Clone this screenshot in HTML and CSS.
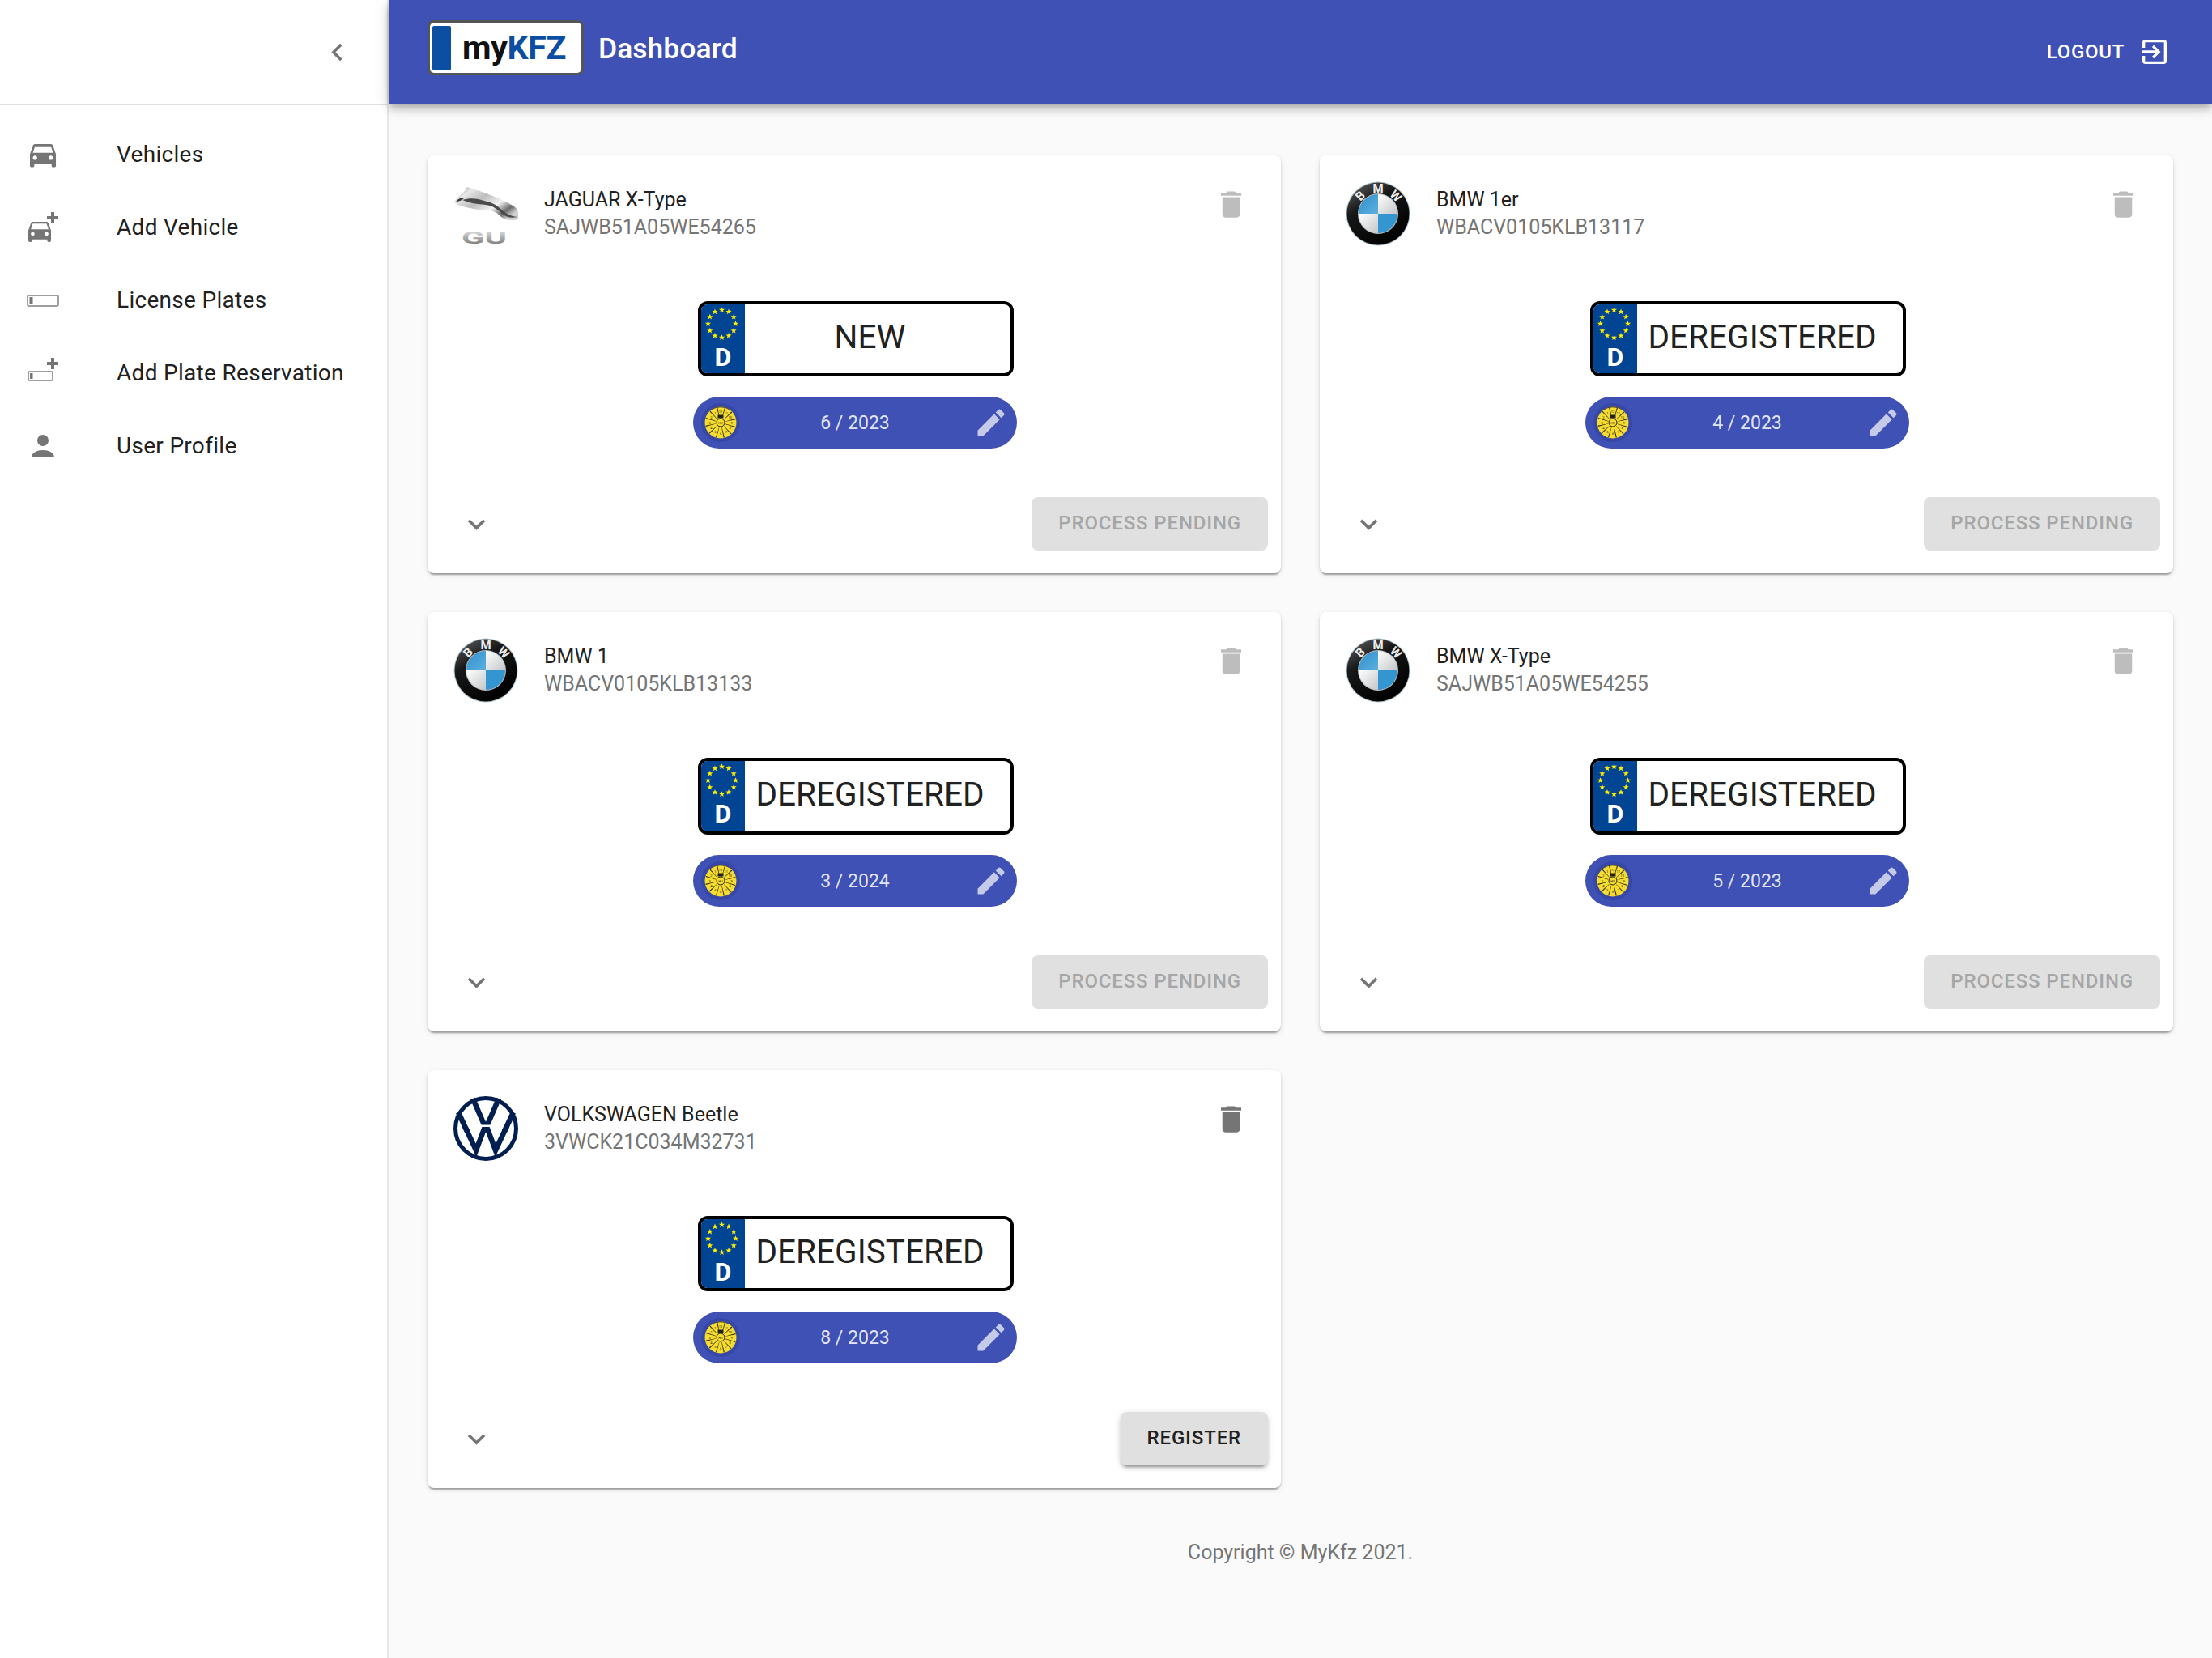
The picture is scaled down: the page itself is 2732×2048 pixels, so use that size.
FILE: index.html
```html
<!DOCTYPE html>
<html lang="en">
<head>
    <meta charset="UTF-8">
    <title>myKFZ Dashboard</title>
    <link rel="stylesheet" href="styles.css">
</head>
<body>
    <!-- shared icons and logos -->
    <svg class="sprite" aria-hidden="true">
        <defs>
            <path id="car" d="M18.92 6.01C18.72 5.42 18.16 5 17.5 5h-11c-.66 0-1.21.42-1.42 1.01L3 12v8c0 .55.45 1 1 1h1c.55 0 1-.45 1-1v-1h12v1c0 .55.45 1 1 1h1c.55 0 1-.45 1-1v-8l-2.08-5.99zM6.5 16c-.83 0-1.5-.67-1.5-1.5S5.67 13 6.5 13s1.5.67 1.5 1.5S7.33 16 6.5 16zm11 0c-.83 0-1.5-.67-1.5-1.5s.67-1.5 1.5-1.5 1.5.67 1.5 1.5-.67 1.5-1.5 1.5zM5 11l1.5-4.5h11L19 11H5z"/>
            <path id="plus" d="M34 6h4v5h5v4h-5v5h-4v-5h-5v-4h5z"/>
            <polygon id="star" points="0,-3.7 1,-1.2 3.600,-1.200 1.500,.45 2.300,3 0,1.500 -2.300,3 -1.500,.45 -3.600,-1.200 -1,-1.200"/>
            <linearGradient id="bmwRim" x1="0" y1="0" x2="0.6" y2="1">
                <stop offset="0" stop-color="#666"/>
                <stop offset=".4" stop-color="#181818"/>
                <stop offset="1" stop-color="#000"/>
            </linearGradient>
            <linearGradient id="bmwBlue" x1="0" y1="0" x2="1" y2="1">
                <stop offset="0" stop-color="#2f8fcb"/>
                <stop offset="1" stop-color="#5cb0e0"/>
            </linearGradient>
            <linearGradient id="bmwWhite" x1="0" y1="0" x2="1" y2="1">
                <stop offset="0" stop-color="#fff"/>
                <stop offset="1" stop-color="#c4c6c8"/>
            </linearGradient>
            <linearGradient id="chrome" x1="0" y1="0" x2="1" y2=".7">
                <stop offset="0" stop-color="#8c8c8c"/>
                <stop offset=".22" stop-color="#e8e8e8"/>
                <stop offset=".45" stop-color="#bdbdbd"/>
                <stop offset=".7" stop-color="#f2f2f2"/>
                <stop offset=".88" stop-color="#6a6a6a"/>
                <stop offset="1" stop-color="#d0d0d0"/>
            </linearGradient>
            <linearGradient id="chromeText" x1="0" y1="0" x2="0" y2="1">
                <stop offset="0" stop-color="#f0f0f0"/>
                <stop offset=".45" stop-color="#b0b0b0"/>
                <stop offset="1" stop-color="#666"/>
            </linearGradient>
            <clipPath id="vwTop"><rect x="0" y="0" width="80" height="35.5"/></clipPath>
            <clipPath id="vwBottom"><rect x="0" y="38" width="80" height="42"/></clipPath>
        </defs>

        <symbol id="logo-bmw" viewBox="0 0 80 80">
            <circle cx="40" cy="40" r="39.5" fill="#a9bcc6"/>
            <circle cx="40" cy="40" r="38.5" fill="url(#bmwRim)"/>
            <circle cx="40" cy="40" r="25" fill="#b9bcbe"/>
            <path d="M40 40V16A24 24 0 0 0 16 40z" fill="url(#bmwBlue)"/>
            <path d="M40 40V16A24 24 0 0 1 64 40z" fill="url(#bmwWhite)"/>
            <path d="M40 40H16A24 24 0 0 0 40 64z" fill="url(#bmwWhite)"/>
            <path d="M40 40H64A24 24 0 0 1 40 64z" fill="#3496d0"/>
            <g class="bmw-letters">
                <text x="40" y="14" transform="rotate(-45 40 40)">B</text>
                <text x="40" y="14">M</text>
                <text x="40" y="14" transform="rotate(45 40 40)">W</text>
            </g>
        </symbol>

        <symbol id="logo-vw" viewBox="0 0 80 80">
            <circle cx="40" cy="40" r="37.500" fill="none" stroke="#001e50" stroke-width="5"/>
            <g fill="none" stroke="#001e50" stroke-width="6.500">
                <path d="M24 3 40 40 56 3" clip-path="url(#vwTop)"/>
                <path d="M6 20 28 67 40 35 52 67 74 20" clip-path="url(#vwBottom)"/>
                <path d="M6 20 17 43.500M74 20 63 43.500"/>
            </g>
        </symbol>

        <symbol id="logo-jaguar" viewBox="0 0 80 80">
            <path d="M1 26C4 19 11 16 13 13 15 10 16 8 17 7 30 11 58 20 75 31 79 34 80 37 80 40V47C72 49 64 48 59 44 54 39 51 37 45 36 37 35 29 36 21 33 13 32 6 30 1 26z" fill="url(#chrome)"/>
            <path d="M11 23C20 20 30 21 38 24 46 26 52 28 58 34 63 39 70 43 79 44 71 46 64 44 59 39 54 34 48 30 40 29 30 28 20 27 11 23z" fill="#4a4a4a"/>
            <path d="M3 25C6 21 10 20 14 20 11 23 7 25 3 25z" fill="#3c3c3c"/>
            <text class="jaguar-text" x="10" y="77" textLength="56" lengthAdjust="spacingAndGlyphs">GU</text>
        </symbol>

        <symbol id="sticker" viewBox="0 0 48 48">
            <circle cx="24" cy="24" r="24" fill="#3747a6"/>
            <circle cx="24" cy="24" r="19.500" fill="#f6dc2e"/>
            <path d="M11 9.500A19.500 19.500 0 0 1 37 9.500 22 22 0 0 0 11 9.500z" fill="#1c1c1c"/>
            <circle cx="24" cy="24" r="12.500" fill="none" stroke="#2b2608" stroke-width="13" pathLength="120" stroke-dasharray="1.200 8.800" transform="rotate(15 24 24)"/>
            <circle cx="24" cy="24" r="5" fill="#f6dc2e" stroke="#222" stroke-width="1"/>
            <rect x="20.500" y="14.500" width="7" height="4" fill="#222"/>
            <g class="sticker-text">
                <text x="24" y="24">HU</text>
                <text x="24" y="10.500">12</text><text x="30.800" y="12.300">11</text><text x="35.700" y="17.300">10</text>
                <text x="37.500" y="24">9</text><text x="35.700" y="30.800">8</text><text x="30.800" y="35.700">7</text>
                <text x="24" y="37.500">6</text><text x="17.300" y="35.700">5</text><text x="12.300" y="30.800">4</text>
                <text x="10.500" y="24">3</text><text x="12.300" y="17.300">2</text><text x="17.300" y="12.300">1</text>
            </g>
        </symbol>

        <symbol id="eu-band" viewBox="0 0 53 48">
            <g fill="#ffed00">
                <use href="#star" x="25.500" y="7"/>
                <use href="#star" x="34" y="9.300"/>
                <use href="#star" x="40.200" y="15.500"/>
                <use href="#star" x="42.500" y="24"/>
                <use href="#star" x="40.200" y="32.500"/>
                <use href="#star" x="34" y="38.700"/>
                <use href="#star" x="25.500" y="41"/>
                <use href="#star" x="17" y="38.700"/>
                <use href="#star" x="10.800" y="32.500"/>
                <use href="#star" x="8.500" y="24"/>
                <use href="#star" x="10.800" y="15.500"/>
                <use href="#star" x="17" y="9.300"/>
            </g>
        </symbol>

        <symbol id="icon-delete" viewBox="0 0 24 24"><path d="M6 19c0 1.100.9 2 2 2h8c1.100 0 2-.9 2-2V7H6v12zM19 4h-3.500l-1-1h-5l-1 1H5v2h14V4z"/></symbol>
        <symbol id="icon-edit" viewBox="0 0 24 24"><path d="M3 17.250V21h3.750L17.810 9.940l-3.750-3.750L3 17.250zM20.710 7.040c.39-.39.39-1.020 0-1.410l-2.340-2.340c-.39-.39-1.020-.39-1.410 0l-1.830 1.830 3.750 3.750 1.830-1.830z"/></symbol>
        <symbol id="icon-expand" viewBox="0 0 24 24"><path d="M16.590 8.590L12 13.170 7.410 8.590 6 10l6 6 6-6z"/></symbol>
    </svg>

    <aside class="sidebar">
        <div class="sidebar-top">
            <svg class="icon-43 grey" viewBox="0 0 24 24"><path d="M15.410 7.410L14 6l-6 6 6 6 1.410-1.410L10.830 12z"/></svg>
        </div>
        <nav class="nav-list">
            <a class="nav-item">
                <svg class="nav-icon" viewBox="0 0 48 48"><use href="#car" transform="translate(2.660 3.100) scale(1.780)"/></svg>
                <span>Vehicles</span>
            </a>
            <a class="nav-item">
                <svg class="nav-icon" viewBox="0 0 48 48"><use href="#car" transform="translate(1.330 10.200) scale(1.556)"/><use href="#plus"/></svg>
                <span>Add Vehicle</span>
            </a>
            <a class="nav-item">
                <svg class="nav-icon" viewBox="0 0 48 48"><rect class="plate-outline" x="5" y="19" width="38" height="13" rx="2"/><rect x="7.500" y="21" width="4" height="9"/></svg>
                <span>License Plates</span>
            </a>
            <a class="nav-item">
                <svg class="nav-icon" viewBox="0 0 48 48"><rect class="plate-outline" x="6" y="23" width="30" height="11" rx="2"/><rect x="8" y="25" width="3.500" height="7"/><use href="#plus"/></svg>
                <span>Add Plate Reservation</span>
            </a>
            <a class="nav-item">
                <svg class="nav-icon" viewBox="0 0 48 48"><circle cx="24" cy="18" r="7"/><path d="M10 39c0-6 7-9 14-9s14 3 14 9z"/></svg>
                <span>User Profile</span>
            </a>
        </nav>
    </aside>

    <div class="page">
        <header class="appbar">
            <div class="brand">
                <div class="brand-band"></div>
                <div class="brand-name">my<span>KFZ</span></div>
            </div>
            <h1 class="page-title">Dashboard</h1>
            <a class="logout">
                <span>LOGOUT</span>
                <svg class="logout-icon" viewBox="0 0 24 24"><path d="M10.090 15.590L11.500 17l5-5-5-5-1.410 1.410L12.670 11H3v2h9.670l-2.580 2.590zM19 3H5c-1.110 0-2 .9-2 2v4h2V5h14v14H5v-4H3v4c0 1.100.89 2 2 2h14c1.100 0 2-.9 2-2V5c0-1.100-.9-2-2-2z"/></svg>
            </a>
        </header>

        <main class="content">
            <div class="card-grid">
                <section class="card">
                    <div class="card-head">
                        <svg class="car-logo"><use href="#logo-jaguar"/></svg>
                        <div class="car-text">
                            <div class="car-name">JAGUAR X-Type</div>
                            <div class="car-vin">SAJWB51A05WE54265</div>
                        </div>
                        <svg class="icon-43 delete disabled"><use href="#icon-delete"/></svg>
                    </div>
                    <div class="card-body">
                        <div class="plate">
                            <div class="plate-band"><svg class="plate-stars"><use href="#eu-band"/></svg><span>D</span></div>
                            <div class="plate-text">NEW</div>
                        </div>
                        <div class="inspection">
                            <svg class="sticker"><use href="#sticker"/></svg>
                            <span class="inspection-date">6 / 2023</span>
                            <svg class="icon-43 edit"><use href="#icon-edit"/></svg>
                        </div>
                    </div>
                    <div class="card-actions">
                        <svg class="icon-43 grey"><use href="#icon-expand"/></svg>
                        <button class="action-btn" disabled>PROCESS PENDING</button>
                    </div>
                </section>

                <section class="card">
                    <div class="card-head">
                        <svg class="car-logo"><use href="#logo-bmw"/></svg>
                        <div class="car-text">
                            <div class="car-name">BMW 1er</div>
                            <div class="car-vin">WBACV0105KLB13117</div>
                        </div>
                        <svg class="icon-43 delete disabled"><use href="#icon-delete"/></svg>
                    </div>
                    <div class="card-body">
                        <div class="plate">
                            <div class="plate-band"><svg class="plate-stars"><use href="#eu-band"/></svg><span>D</span></div>
                            <div class="plate-text">DEREGISTERED</div>
                        </div>
                        <div class="inspection">
                            <svg class="sticker"><use href="#sticker"/></svg>
                            <span class="inspection-date">4 / 2023</span>
                            <svg class="icon-43 edit"><use href="#icon-edit"/></svg>
                        </div>
                    </div>
                    <div class="card-actions">
                        <svg class="icon-43 grey"><use href="#icon-expand"/></svg>
                        <button class="action-btn" disabled>PROCESS PENDING</button>
                    </div>
                </section>

                <section class="card">
                    <div class="card-head">
                        <svg class="car-logo"><use href="#logo-bmw"/></svg>
                        <div class="car-text">
                            <div class="car-name">BMW 1</div>
                            <div class="car-vin">WBACV0105KLB13133</div>
                        </div>
                        <svg class="icon-43 delete disabled"><use href="#icon-delete"/></svg>
                    </div>
                    <div class="card-body">
                        <div class="plate plate-tall">
                            <div class="plate-band"><svg class="plate-stars"><use href="#eu-band"/></svg><span>D</span></div>
                            <div class="plate-text">DEREGISTERED</div>
                        </div>
                        <div class="inspection">
                            <svg class="sticker"><use href="#sticker"/></svg>
                            <span class="inspection-date">3 / 2024</span>
                            <svg class="icon-43 edit"><use href="#icon-edit"/></svg>
                        </div>
                    </div>
                    <div class="card-actions">
                        <svg class="icon-43 grey"><use href="#icon-expand"/></svg>
                        <button class="action-btn" disabled>PROCESS PENDING</button>
                    </div>
                </section>

                <section class="card">
                    <div class="card-head">
                        <svg class="car-logo"><use href="#logo-bmw"/></svg>
                        <div class="car-text">
                            <div class="car-name">BMW X-Type</div>
                            <div class="car-vin">SAJWB51A05WE54255</div>
                        </div>
                        <svg class="icon-43 delete disabled"><use href="#icon-delete"/></svg>
                    </div>
                    <div class="card-body">
                        <div class="plate plate-tall">
                            <div class="plate-band"><svg class="plate-stars"><use href="#eu-band"/></svg><span>D</span></div>
                            <div class="plate-text">DEREGISTERED</div>
                        </div>
                        <div class="inspection">
                            <svg class="sticker"><use href="#sticker"/></svg>
                            <span class="inspection-date">5 / 2023</span>
                            <svg class="icon-43 edit"><use href="#icon-edit"/></svg>
                        </div>
                    </div>
                    <div class="card-actions">
                        <svg class="icon-43 grey"><use href="#icon-expand"/></svg>
                        <button class="action-btn" disabled>PROCESS PENDING</button>
                    </div>
                </section>

                <section class="card">
                    <div class="card-head">
                        <svg class="car-logo"><use href="#logo-vw"/></svg>
                        <div class="car-text">
                            <div class="car-name">VOLKSWAGEN Beetle</div>
                            <div class="car-vin">3VWCK21C034M32731</div>
                        </div>
                        <svg class="icon-43 delete"><use href="#icon-delete"/></svg>
                    </div>
                    <div class="card-body">
                        <div class="plate">
                            <div class="plate-band"><svg class="plate-stars"><use href="#eu-band"/></svg><span>D</span></div>
                            <div class="plate-text">DEREGISTERED</div>
                        </div>
                        <div class="inspection">
                            <svg class="sticker"><use href="#sticker"/></svg>
                            <span class="inspection-date">8 / 2023</span>
                            <svg class="icon-43 edit"><use href="#icon-edit"/></svg>
                        </div>
                    </div>
                    <div class="card-actions">
                        <svg class="icon-43 grey"><use href="#icon-expand"/></svg>
                        <button class="action-btn active">REGISTER</button>
                    </div>
                </section>
            </div>
            <footer class="copyright">Copyright © MyKfz 2021.</footer>
        </main>
    </div>
</body>
</html>
```

FILE: styles.css
```css
* {
    box-sizing: border-box;
}
body {
    margin: 0;
    height: 2048px;
    display: flex;
    font-family: Roboto, sans-serif;
    color: #212121;
    background-color: #fafafa;
    overflow: hidden;
}
/* holds only symbols and defs, draws nothing */
.sprite {
    position: absolute;
    top: 0;
    left: 0;
    width: 100%;
    height: 100%;
    z-index: -1;
}

/* sidebar */
.sidebar {
    width: 480px;
    flex: none;
    background-color: #fff;
    border-right: 2px solid #e8e8e8;
}
.sidebar-top {
    height: 130px;
    display: flex;
    align-items: center;
    justify-content: flex-end;
    padding: 0 40px 0 0;
    border-bottom: 2px solid #e0e0e0;
}
.nav-list {
    padding-top: 15px;
}
.nav-item {
    height: 90px;
    display: flex;
    align-items: center;
    padding-left: 29px;
    font-size: 28px;
    letter-spacing: 0.3px;
}
.nav-icon {
    width: 48px;
    height: 48px;
    flex: none;
    margin-right: 67px;
    fill: #757575;
}
.plate-outline {
    fill: #fff;
    stroke: #9e9e9e;
    stroke-width: 2;
}
.icon-43 {
    width: 43px;
    height: 43px;
    flex: none;
}
.grey {
    fill: #757575;
}

/* top bar */
.page {
    flex: 1;
    display: flex;
    flex-direction: column;
    min-width: 0;
}
.appbar {
    height: 128px;
    flex: none;
    display: flex;
    align-items: center;
    padding: 0 48px;
    color: #fff;
    background-color: #3f51b5;
    box-shadow: 0 4px 8px -2px rgba(0,0,0,0.2), 0 8px 10px 0 rgba(0,0,0,0.14), 0 2px 20px 0 rgba(0,0,0,0.12);
    position: relative;
}
.brand {
    width: 193px;
    height: 68px;
    margin-top: -10px;
    display: flex;
    align-items: center;
    padding-left: 3px;
    background-color: #fff;
    border: 3px solid #555;
    border-radius: 8px;
}
.brand-band {
    width: 23px;
    height: 55px;
    border-radius: 2px;
    background-color: #0b4ea2;
}
.brand-name {
    margin-left: 14px;
    font-size: 41px;
    font-weight: 700;
    line-height: 1;
    color: #111;
    letter-spacing: -0.3px;
}
.brand-name span {
    color: #0b4ea2;
}
.page-title {
    margin: -8px 0 0 18px;
    font-size: 35.5px;
    font-weight: 500;
    letter-spacing: 0;
}
.logout {
    margin-left: auto;
    margin-right: 3px;
    display: flex;
    align-items: center;
    font-size: 24px;
    font-weight: 500;
    letter-spacing: 0.7px;
}
.logout-icon {
    width: 40px;
    height: 40px;
    margin-left: 17px;
    fill: #fff;
}

/* vehicle cards */
.content {
    flex: 1;
    padding: 64px 48px 0;
}
.card-grid {
    display: grid;
    grid-template-columns: 1fr 1fr;
    gap: 48px;
}
.card {
    background-color: #fff;
    border-radius: 8px;
    box-shadow: 0 4px 2px -2px rgba(0,0,0,0.2), 0 2px 2px 0 rgba(0,0,0,0.14), 0 2px 6px 0 rgba(0,0,0,0.12);
}
.card-head {
    display: flex;
    align-items: center;
    padding: 32px 40px 32px 32px;
}
.car-logo {
    width: 80px;
    height: 80px;
    flex: none;
    margin-right: 32px;
}
.car-text {
    flex: 1;
    font-size: 25px;
    line-height: 34px;
}
.car-vin {
    color: #757575;
}
.delete {
    align-self: flex-start;
    margin-top: 7px;
    fill: #757575;
}
.delete.disabled {
    fill: #bdbdbd;
}
.bmw-letters text {
    font-family: Roboto, sans-serif;
    font-size: 15px;
    font-weight: 700;
    fill: #ececec;
    text-anchor: middle;
}
.jaguar-text {
    font-family: Roboto, sans-serif;
    font-size: 20px;
    font-weight: 700;
    fill: url(#chromeText);
}
.sticker-text text {
    font-family: Roboto, sans-serif;
    font-size: 4px;
    fill: #222;
    text-anchor: middle;
    dominant-baseline: central;
}

.card-body {
    display: flex;
    flex-direction: column;
    align-items: center;
    margin-top: 36px;
    padding-left: 3px;
}
.plate {
    width: 390px;
    height: 93px;
    display: flex;
    background-color: #fff;
    border: 4px solid #000;
    border-radius: 12px;
    overflow: hidden;
}
.plate-tall {
    height: 95px;
}
.plate-band {
    width: 54px;
    flex: none;
    display: flex;
    flex-direction: column;
    align-items: center;
    color: #fff;
    background-color: #004494;
}
.plate-stars {
    width: 53px;
    height: 48px;
    flex: none;
}
.plate-band span {
    font-size: 32px;
    font-weight: 700;
    line-height: 35px;
    margin-left: 1px;
}
.plate-text {
    flex: 1;
    padding: 0 18px 6px 0;
    display: flex;
    align-items: center;
    justify-content: center;
    font-size: 40.5px;
    color: #212121;
}
.inspection {
    width: 400px;
    height: 64px;
    margin-top: 25px;
    margin-right: 2px;
    display: flex;
    align-items: center;
    padding: 0 10px;
    color: rgba(255,255,255,0.87);
    background-color: #3f51b5;
    border-radius: 32px;
}
.sticker {
    width: 48px;
    height: 48px;
    flex: none;
}
.inspection-date {
    flex: 1;
    padding-right: 3px;
    text-align: center;
    font-size: 23px;
    letter-spacing: 0;
}
.edit {
    width: 44px;
    height: 44px;
    fill: #c5cae9;
}
.card-actions {
    height: 66px;
    margin: 60px 16px 28px 0;
    display: flex;
    align-items: center;
    justify-content: space-between;
    padding-left: 39px;
}
.action-btn {
    height: 66px;
    padding: 0 33px 2px;
    font-family: Roboto, sans-serif;
    font-size: 24px;
    font-weight: 500;
    letter-spacing: 0.85px;
    color: #a6a6a6;
    background-color: #e0e0e0;
    border: none;
    border-radius: 8px;
}
.action-btn.active {
    color: #212121;
    box-shadow: 0 6px 2px -4px rgba(0,0,0,0.2), 0 4px 4px 0 rgba(0,0,0,0.14), 0 2px 10px 0 rgba(0,0,0,0.12);
}
.copyright {
    margin-top: 64px;
    text-align: center;
    font-size: 25px;
    line-height: 32px;
    color: #757575;
}
```
